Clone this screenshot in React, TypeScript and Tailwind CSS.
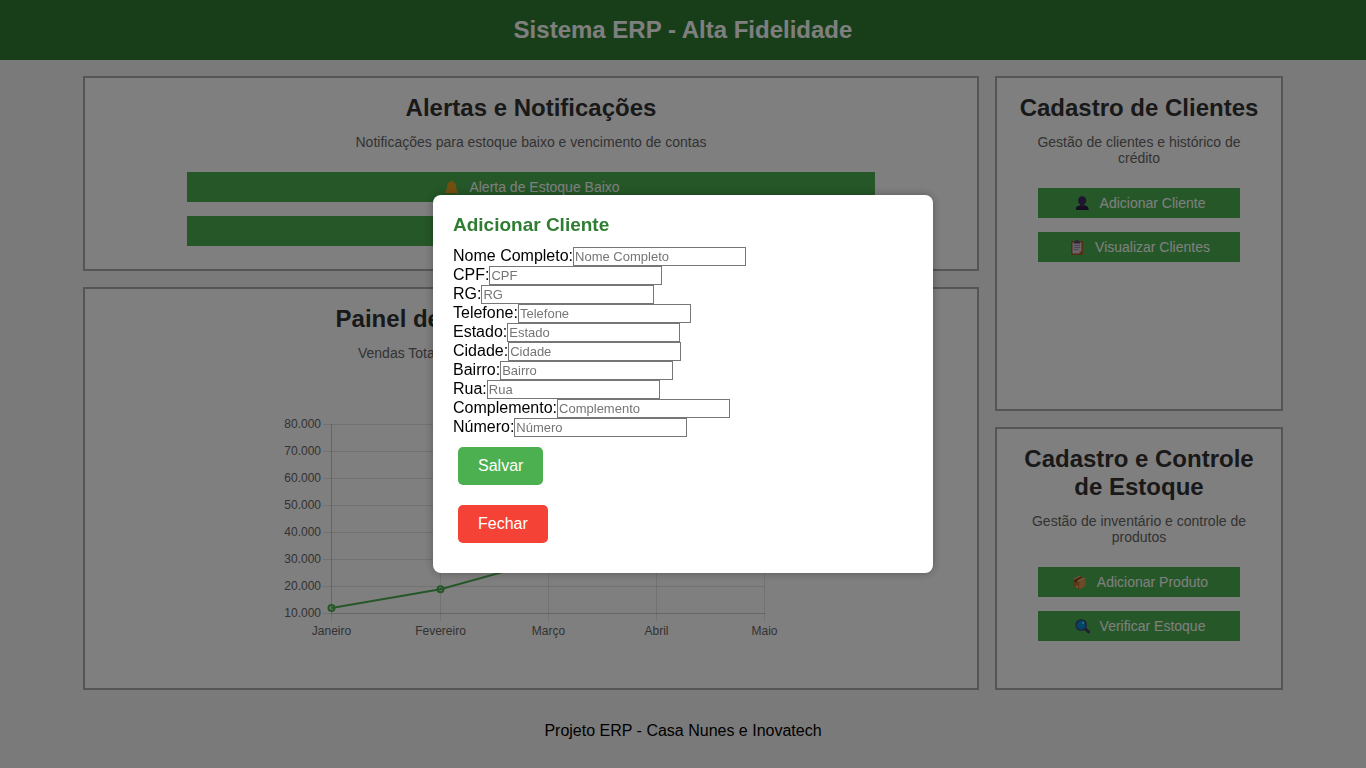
import type { ReactNode } from "react";

const fields = [
  { id: "nome", label: "Nome Completo" },
  { id: "cpf", label: "CPF" },
  { id: "rg", label: "RG" },
  { id: "telefone", label: "Telefone" },
  { id: "estado", label: "Estado" },
  { id: "cidade", label: "Cidade" },
  { id: "bairro", label: "Bairro" },
  { id: "rua", label: "Rua" },
  { id: "complemento", label: "Complemento" },
  { id: "numero", label: "Número" },
];

const sales = [
  { month: "Janeiro", value: 12000 },
  { month: "Fevereiro", value: 19000 },
  { month: "Março", value: 30000 },
  { month: "Abril", value: 50000 },
  { month: "Maio", value: 80000 },
];

const ticks = [80, 70, 60, 50, 40, 30, 20, 10];

function Icon({ children }: { children: ReactNode }) {
  return (
    <svg className="h-4 w-[19px] shrink-0" viewBox="0 0 19 16" aria-hidden="true">
      {children}
    </svg>
  );
}

function BellIcon() {
  return (
    <Icon>
      <path d="M8.3 14h2.8a1.4 1.4 0 0 1-2.8 0Z" fill="#d67d00" />
      <path
        d="M9.5 1.8c.8 0 1.200.5 1.300 1.100 2 .6 3 2.200 3.200 4.400.2 2.900.7 4.300 1.900 5.500.4.500.2 1.200-.5 1.200H3.600c-.7 0-.9-.7-.5-1.200 1.200-1.200 1.700-2.600 1.900-5.500.2-2.200 1.200-3.800 3.200-4.400.1-.6.500-1.100 1.300-1.100Z"
        fill="#e8a11f"
      />
    </Icon>
  );
}

function WarningIcon() {
  return (
    <Icon>
      <path d="M9.5 2 16 14H3Z" fill="#ffc83d" />
      <path d="M9 6h1v4H9Zm0 5h1v1H9Z" fill="#333" />
    </Icon>
  );
}

function PersonIcon() {
  return (
    <Icon>
      <path
        d="M3 15v-1.300c0-1.700 1.200-2.500 4-3.100V9.300C5.600 8.400 5.200 7.200 5.200 5.500 5.200 2.900 6.700 1.200 9.200 1.200s4 1.700 4 4.300c0 1.700-.4 2.900-1.800 3.800v1.300c2.800.6 4 1.400 4 3.100V15Z"
        fill="#402a5c"
      />
      <path d="M3 15v-1.300c0-1.500 1-2.400 3.300-2.900 1.800 1 4 1 5.800 0 2.300.5 3.300 1.400 3.300 2.900V15Z" fill="#2b1d40" />
    </Icon>
  );
}

function ClipboardIcon() {
  return (
    <Icon>
      <rect x="3" y="2" width="12" height="14" rx="1" fill="#a8562b" />
      <path d="M4.500 3.500h9V12L11 14.500H4.500Z" fill="#cfc7d2" />
      <path d="M13.500 12 11 14.500V12Z" fill="#e8ad88" />
      <path d="M6 2h1.700a1.300 1.300 0 0 1 2.600 0H12v2.500H6Z" fill="#5d4d69" />
      <path d="M6 6.500h6M6 8.500h6M6 10.500h4.500" stroke="#998ca2" strokeWidth="1" />
    </Icon>
  );
}

function BoxIcon() {
  return (
    <Icon>
      <path d="M3 5 9.300 1.800l6.200 2.700-6.200 3.500Z" fill="#e5a665" />
      <path d="M3 5 9.300 8v7.500L3 12.500Z" fill="#bd7132" />
      <path d="m9.300 8 6.200-3.500v7.500l-6.200 3.500Z" fill="#d89450" />
      <path d="M4.600 5.800 11 2.500l1.800.8-6.300 3.400v2l-1.900-.9Z" fill="#703b20" />
      <path d="m6.200 11.600 1.800.9v1.400l-1.800-.9Z" fill="#efdac4" />
    </Icon>
  );
}

function SearchIcon() {
  return (
    <Icon>
      <path d="m11.800 10.500 3.800 3.400" stroke="#433a68" strokeWidth="3" strokeLinecap="round" />
      <circle cx="8.200" cy="7" r="5.200" fill="#008acb" stroke="#443d78" strokeWidth="1.300" />
      <circle cx="10" cy="4.900" r="1.100" fill="#8cd0f4" />
    </Icon>
  );
}

function Card({ title, text, className, children }: { title: string; text: string; className: string; children: ReactNode }) {
  return (
    <section className={`border-2 border-[#aaa] bg-white p-4 text-center ${className}`}>
      <h2 className="mb-3 text-[24px] leading-[28px] font-bold text-[#333]">{title}</h2>
      <p className="px-2 text-[14px] leading-4 text-[#666]">{text}</p>
      {children}
    </section>
  );
}

function Actions({ children }: { children: ReactNode }) {
  return <div className="mt-[22px] mb-[7px] flex flex-col items-center gap-[14px]">{children}</div>;
}

function ActionButton({ icon, children }: { icon: ReactNode; children: ReactNode }) {
  return (
    <button
      type="button"
      className="flex h-[30px] w-4/5 items-center justify-center gap-2 bg-[#4caf50] text-[14px] leading-4 text-white"
    >
      {icon}
      <span>{children}</span>
    </button>
  );
}

function SalesChart() {
  const xs = [50.5, 159.5, 267.5, 375.5, 483.5];
  const y = (value: number) => 222.5 - ((value - 10000) / 10000) * 27;
  const points = sales.map((s, i) => `${xs[i]},${y(s.value)}`).join(" ");
  return (
    <svg
      className="mx-auto mt-[30px] block h-[250px] w-[500px] max-w-full"
      viewBox="0 0 500 250"
      role="img"
      aria-label="Vendas por mês"
    >
      <g stroke="#000" strokeOpacity="0.1">
        {ticks.map((t) => (
          <line key={t} x1="42" x2="484" y1={y(t * 1000)} y2={y(t * 1000)} />
        ))}
        {xs.map((x) => (
          <line key={x} x1={x} x2={x} y1="33" y2="230" />
        ))}
        <line x1="50.5" x2="50.5" y1="33" y2="223" />
        <line x1="50" x2="484" y1="222.5" y2="222.5" />
      </g>
      <g fill="#666" fontSize="12">
        {ticks.map((t) => (
          <text key={t} x="40" y={y(t * 1000) + 3} textAnchor="end">
            {t}.000
          </text>
        ))}
        {sales.map((s, i) => (
          <text key={s.month} x={xs[i]} y="244" textAnchor="middle">
            {s.month}
          </text>
        ))}
      </g>
      <polyline points={points} fill="none" stroke="#4caf50" strokeWidth="2" />
      {sales.map((s, i) => (
        <circle key={s.month} cx={xs[i]} cy={y(s.value)} r="3" fill="#4caf50" fillOpacity="0.2" stroke="#4caf50" strokeWidth="2" />
      ))}
    </svg>
  );
}

export default function App() {
  return (
    <div className="min-h-screen bg-[#f4f4f4] font-['Liberation_Sans',Arial,sans-serif] text-black">
      <header className="bg-[#2e7d32] py-4 text-center">
        <h1 className="text-[24px] leading-[28px] font-bold text-white">Sistema ERP - Alta Fidelidade</h1>
      </header>

      <main className="mx-auto mt-4 grid max-w-[1200px] grid-cols-4 grid-rows-[auto_124px_auto] gap-4">
        <Card
          title="Alertas e Notificações"
          text="Notificações para estoque baixo e vencimento de contas"
          className="col-span-3"
        >
          <Actions>
            <ActionButton icon={<BellIcon />}>Alerta de Estoque Baixo</ActionButton>
            <ActionButton icon={<WarningIcon />}>Contas a Vencer</ActionButton>
          </Actions>
        </Card>

        <Card title="Cadastro de Clientes" text="Gestão de clientes e histórico de crédito" className="row-span-2">
          <Actions>
            <ActionButton icon={<PersonIcon />}>Adicionar Cliente</ActionButton>
            <ActionButton icon={<ClipboardIcon />}>Visualizar Clientes</ActionButton>
          </Actions>
        </Card>

        <Card
          title="Painel de Indicadores e Relatórios"
          text="Vendas Totais, Estoque Atual, Contas a Pagar, Receber"
          className="col-span-3 row-span-2 min-h-[403px]"
        >
          <SalesChart />
        </Card>

        <Card title="Cadastro e Controle de Estoque" text="Gestão de inventário e controle de produtos" className="">
          <Actions>
            <ActionButton icon={<BoxIcon />}>Adicionar Produto</ActionButton>
            <ActionButton icon={<SearchIcon />}>Verificar Estoque</ActionButton>
          </Actions>
        </Card>
      </main>

      <footer className="pt-8 pb-4 text-center">
        <p className="text-[16px] leading-[18px]">Projeto ERP - Casa Nunes e Inovatech</p>
      </footer>

      <div className="fixed inset-0 flex items-center justify-center bg-black/50">
        <div
          role="dialog"
          aria-modal="true"
          aria-labelledby="modal-title"
          className="w-[500px] max-w-full rounded-lg bg-white p-5 shadow-[0_0_10px_rgba(0,0,0,0.3)]"
        >
          <h3 id="modal-title" className="mb-3 text-[19px] leading-5 font-bold text-[#2e7d32]">
            Adicionar Cliente
          </h3>
          <form onSubmit={(e) => e.preventDefault()}>
            {fields.map((f) => (
              <div key={f.id} className="flex items-start">
                <label htmlFor={f.id} className="text-[16px] leading-[18px]">
                  {f.label}:
                </label>
                <input
                  id={f.id}
                  type="text"
                  placeholder={f.label}
                  className="h-[19px] w-[173px] border border-[#767676] bg-white px-px text-[13px] leading-[15px] placeholder:text-[#757575]"
                />
              </div>
            ))}
            <div className="flex flex-col items-start gap-5 px-[5px] py-[10px]">
              <button type="submit" className="rounded-[5px] bg-[#4caf50] px-5 py-[10px] text-[16px] leading-[18px] text-white">
                Salvar
              </button>
              <button type="button" className="rounded-[5px] bg-[#f44336] px-5 py-[10px] text-[16px] leading-[18px] text-white">
                Fechar
              </button>
            </div>
          </form>
        </div>
      </div>
    </div>
  );
}
